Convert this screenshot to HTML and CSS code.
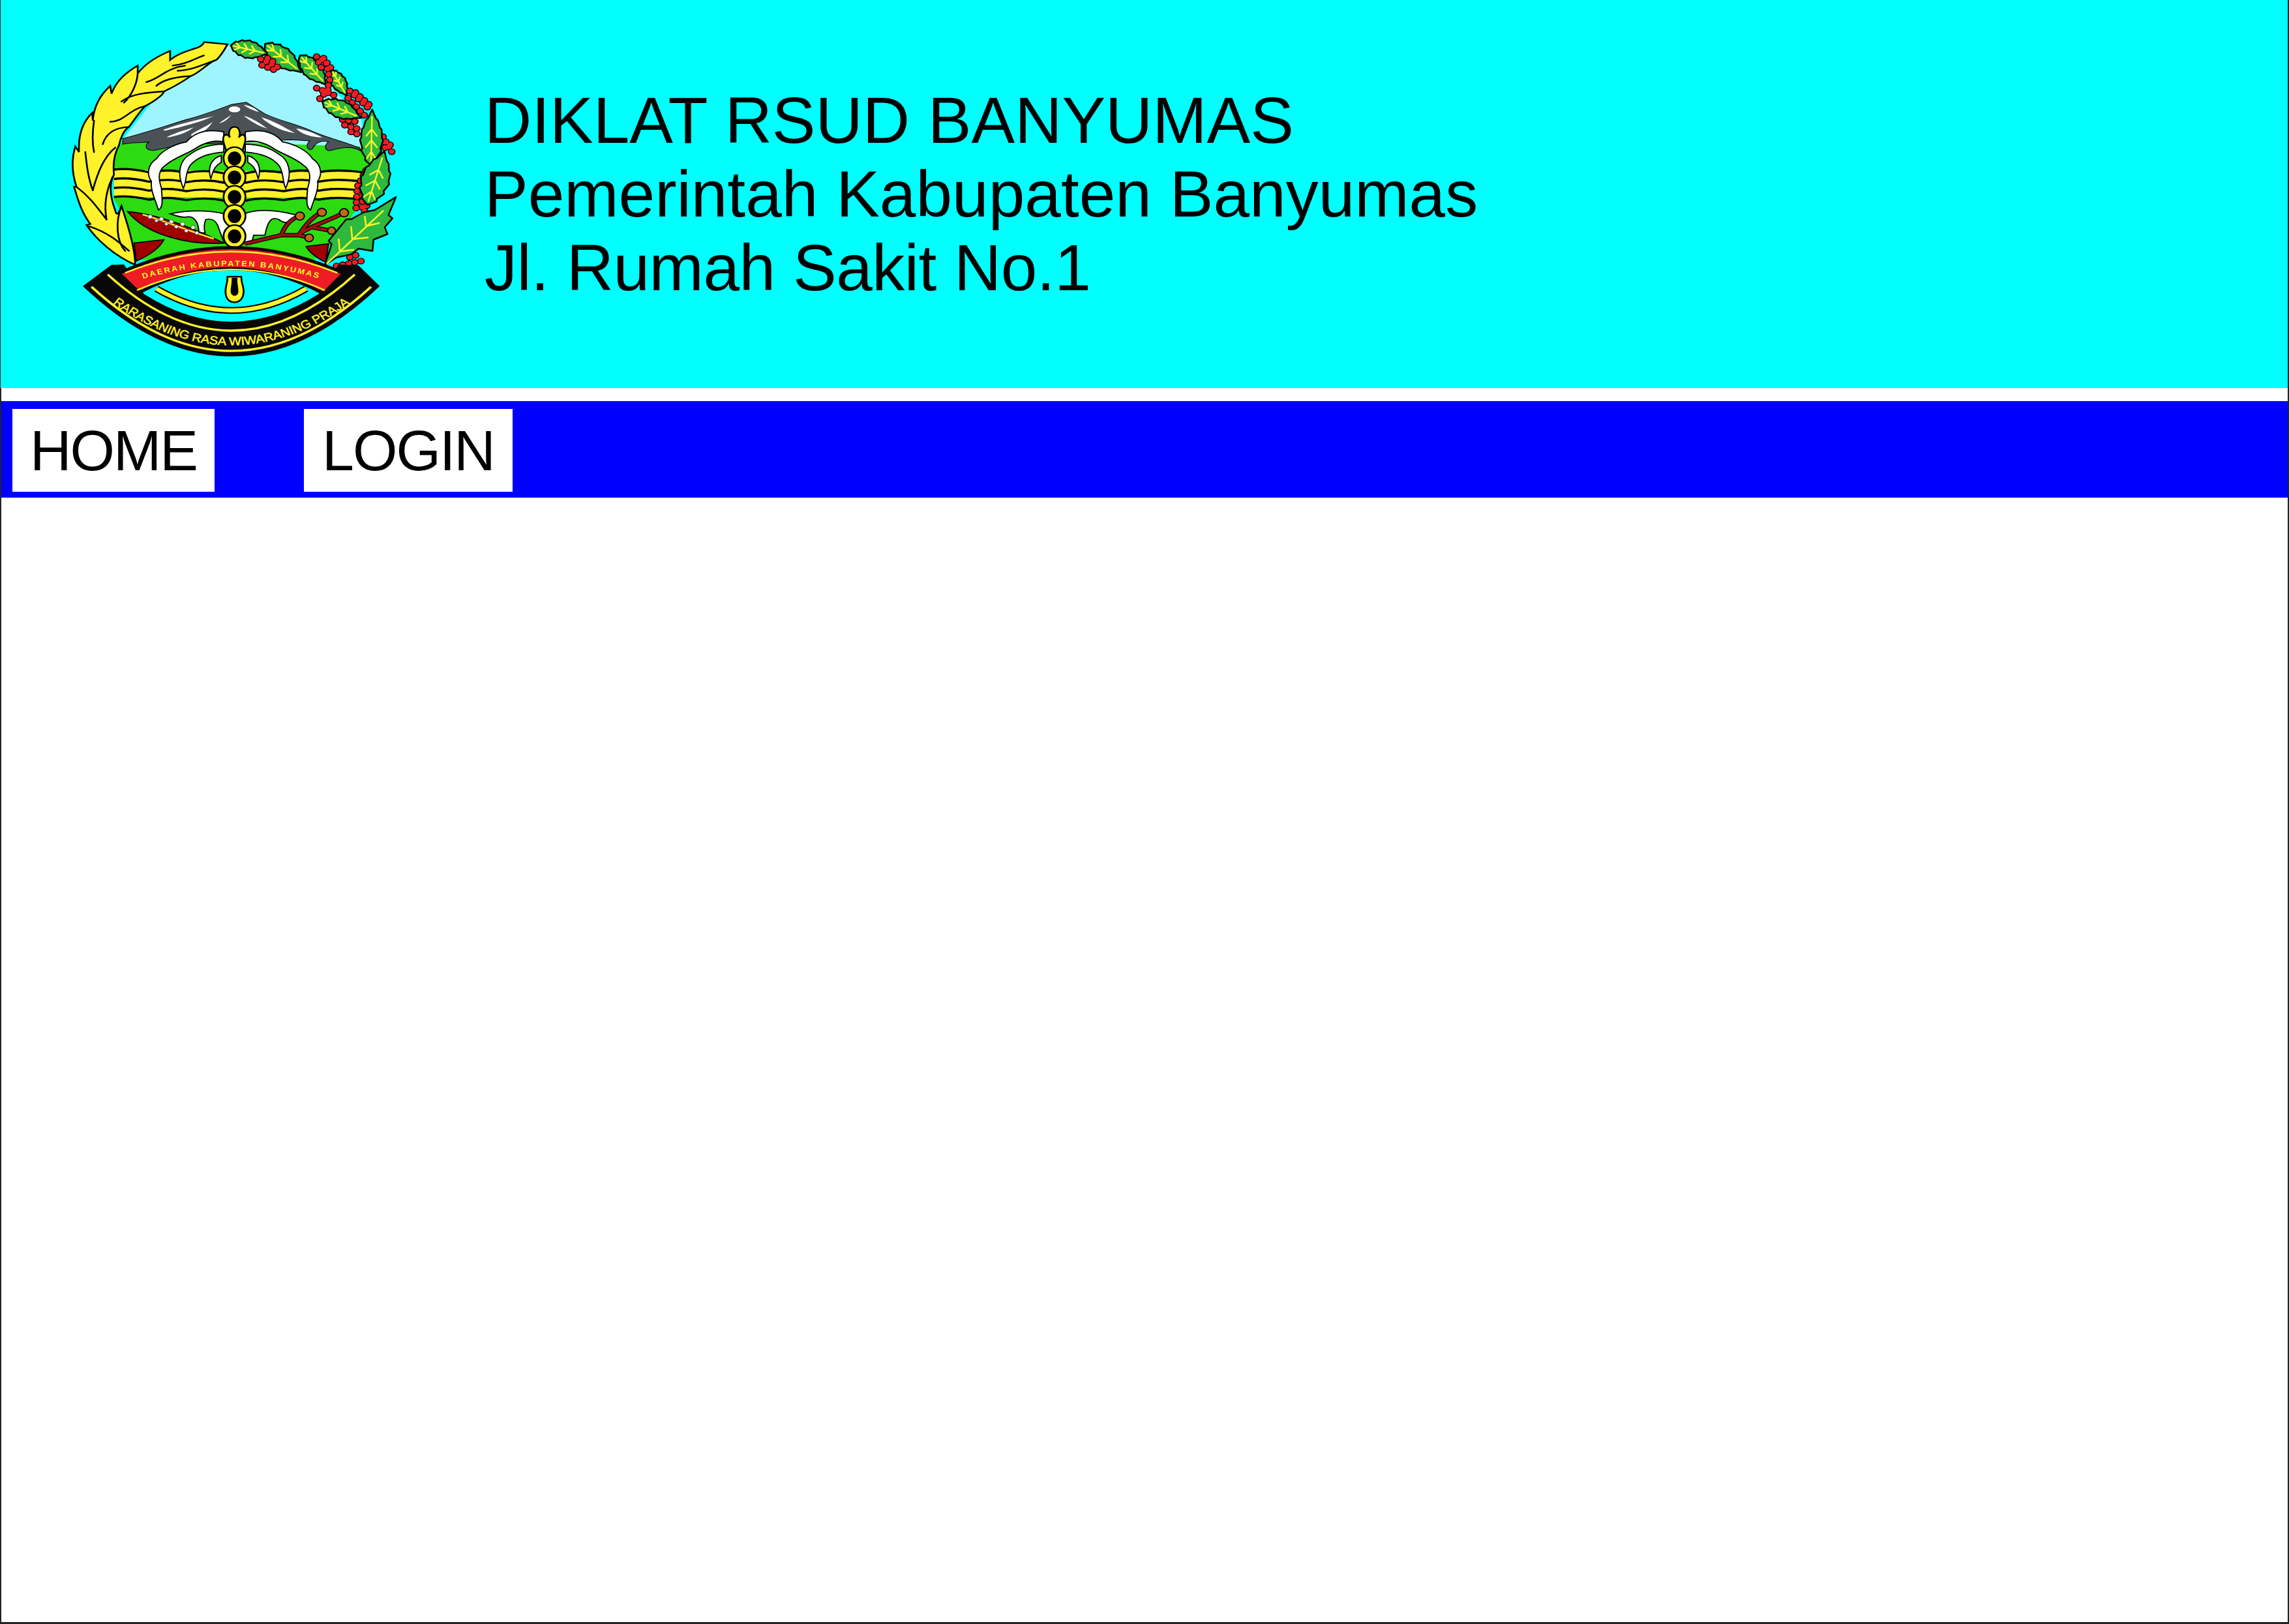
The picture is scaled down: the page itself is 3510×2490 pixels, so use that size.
FILE: index.html
```html
<!DOCTYPE html>
<html lang="en">
  <head>
    <meta charset="UTF-8" />
    <meta name="viewport" content="width=device-width, initial-scale=1.0" />
    <title>Diklat RSUD Banyumas</title>
    <link rel="stylesheet" href="styles.css">
  </head>
  <body>
    <div class="page">
      <header class="banner">
        <svg class="logo" viewBox="0 0 1568 1568" preserveAspectRatio="none" role="img" aria-label="Lambang Kabupaten Banyumas">
          <defs>
            <path id="leaf" class="leaf-body" d="M0 0 L10 -20 L14 -18 L26 -32 L31 -29 L45 -37 L50 -33 L64 -32 L68 -26 L80 -20 L84 -13 L100 0 L84 13 L80 20 L68 26 L64 32 L50 33 L45 37 L31 29 L26 32 L14 18 L10 20 Z" />
            <path id="vein" class="leaf-vein" d="M6 0 L88 0 M25 0 L12 -15 M25 0 L12 15 M45 0 L32 -19 M45 0 L32 19 M65 0 L52 -18 M65 0 L52 18" />
            <path id="berryPath" d="M888 176 L968 218 M893 203 L948 226 M915 172 L950 195 M1112 165 L1150 190 L1165 270 L1150 325 M1140 172 L1172 220 M1120 190 L1140 235 M1112 305 L1185 338 M1125 352 L1165 305 M1245 318 L1318 392 M1238 350 L1305 428 M1268 325 L1322 378 M1216 445 L1288 458 M1225 470 L1288 490 M1250 500 L1288 515 M1378 522 L1415 592 M1362 565 L1398 572 M1385 545 L1410 560 M1310 672 L1275 745 L1270 850 M1298 710 L1295 855 M1322 805 L1300 862 M1192 1097 L1292 1075 M1245 1058 L1288 1042" />
            <path id="stemPath" d="M825 998 L970 960 L1040 960 L1080 970 M970 960 C985 920 1000 895 1040 875 M1040 960 C1070 910 1095 880 1130 858 M1040 955 L1090 925 C1130 905 1180 885 1220 860 M1095 925 L1170 940" />
            <path id="ribbonLine" d="M210 1190 Q770 1760 1330 1190" />
            <path id="mottoLine" d="M272 1246 Q770 1654 1268 1246" />
            <path id="nameLine" d="M370 1170 Q770 1024 1170 1170" />
            <path id="wave" d="M300 668 C350 660 400 670 440 680 C500 668 540 670 590 682 C640 672 690 672 740 684 L830 684 C880 670 930 672 980 682 C1030 670 1070 668 1120 680 C1170 668 1230 670 1295 680" />
            <g id="cloudSet">
              <path d="M740 500 C670 485 620 505 590 545 C540 555 490 585 470 620 C435 645 430 690 450 720 C445 760 465 800 478 848 C500 835 492 790 490 750 C475 700 480 670 505 650 C540 615 590 600 625 575 C665 545 710 535 740 545 Z" />
              <path d="M740 555 C680 555 635 575 605 600 C565 625 550 680 578 752 C592 720 585 680 605 650 C630 615 680 595 740 590 Z" />
              <path d="M730 605 C695 617 672 650 688 710 C695 680 700 655 730 635 Z" />
            </g>
          </defs>

          <path class="sky" d="M765 112 L905 135 L1050 200 L1170 300 L1290 440 L1310 590 L330 540 L480 330 Z" />
          <path class="land" d="M300 600 L340 530 L1285 565 L1325 650 L1300 800 L1250 880 L1170 1000 L1100 1070 L400 1070 L350 900 L300 800 Z" />
          <path class="mountain" d="M335 530 C420 505 520 470 590 445 C660 425 730 395 770 378 L830 368 L905 420 C960 450 1030 465 1090 495 C1160 530 1230 545 1285 572 L1290 585 C1250 560 1210 570 1170 582 C1145 590 1140 560 1160 545 C1130 535 1110 545 1095 575 C1085 590 1060 565 1085 540 L1010 535 L550 560 C520 570 490 575 470 580 C445 590 410 570 440 545 C400 550 370 545 335 555 Z" />
          <g class="snow">
            <ellipse cx="783" cy="400" rx="23" ry="13" />
            <path d="M500 490 C560 465 640 445 700 430 C650 455 570 480 500 495 Z" />
            <path d="M610 510 C640 490 680 470 695 455 C680 485 650 510 610 520 Z" />
            <path d="M510 525 C540 505 580 495 620 480 C590 505 550 520 510 525 Z" />
            <path d="M720 462 L770 425 C755 445 740 458 720 462 Z" />
            <path d="M820 380 C850 385 875 400 880 412 C860 405 835 395 820 380 Z" />
            <path d="M820 428 C860 440 895 470 915 485 C880 475 845 450 820 428 Z" />
            <path d="M890 435 C940 450 980 480 1025 505 C980 500 920 470 890 435 Z" />
            <path d="M1030 485 C1070 490 1110 510 1135 525 C1095 525 1050 510 1030 485 Z" />
          </g>

          <path class="stripes" d="M300 668 L1295 680 L1285 795 L300 790 Z" />
          <g class="wave-lines">
            <use href="#wave" />
            <use href="#wave" y="42" />
            <use href="#wave" y="82" />
            <use href="#wave" y="122" />
          </g>

          <g class="clouds">
            <use href="#cloudSet" />
            <use href="#cloudSet" transform="translate(1566 0) scale(-1 1)" />
          </g>

          <path class="temple" d="M525 865 C590 850 660 845 745 865 L820 865 C880 840 960 850 1030 870 C1020 905 990 915 960 890 C930 875 915 900 905 960 L860 960 L850 1000 L740 990 L720 930 C710 890 690 885 668 890 C660 910 660 930 665 950 L640 950 C640 900 620 870 585 880 C570 880 550 875 525 865 Z" />

          <g class="staff">
            <path d="M783 478 C805 478 808 510 800 525 C812 505 830 510 826 540 C822 565 815 575 815 590 L750 590 C750 575 742 565 738 540 C735 510 752 505 765 525 C757 510 760 478 783 478 Z" />
            <path d="M755 1145 L810 1145 C810 1185 825 1190 818 1225 C810 1270 755 1270 748 1225 C742 1190 755 1185 755 1145 Z" />
            <ellipse cx="783" cy="618" rx="44" ry="50" />
            <ellipse cx="783" cy="703" rx="44" ry="50" />
            <ellipse cx="783" cy="790" rx="44" ry="50" />
            <ellipse cx="783" cy="875" rx="44" ry="50" />
            <ellipse cx="783" cy="965" rx="44" ry="50" />
          </g>
          <g class="links">
            <ellipse cx="783" cy="618" rx="27" ry="31" />
            <ellipse cx="783" cy="703" rx="27" ry="31" />
            <ellipse cx="783" cy="790" rx="27" ry="31" />
            <ellipse cx="783" cy="875" rx="27" ry="31" />
            <ellipse cx="783" cy="965" rx="27" ry="31" />
            <path d="M772 1150 L794 1150 C794 1185 800 1195 798 1215 C795 1235 772 1235 768 1215 C766 1195 772 1185 772 1150 Z" />
          </g>

          <g class="shell">
            <path d="M380 995 L500 980 C480 1025 430 1055 390 1075 Z" />
            <path d="M1070 1010 L1160 998 L1148 1080 C1110 1060 1085 1040 1070 1010 Z" />
          </g>
          <path class="pod" d="M355 855 C500 870 650 945 740 995 C600 1005 430 960 355 855 Z" />
          <path class="pod-seam" d="M415 868 C500 895 620 950 700 975" />
          <g class="seeds">
            <circle cx="445" cy="878" r="9" /><circle cx="490" cy="888" r="9" /><circle cx="470" cy="895" r="7" />
            <circle cx="530" cy="900" r="9" /><circle cx="510" cy="910" r="7" /><circle cx="575" cy="910" r="9" />
            <circle cx="550" cy="922" r="8" /><circle cx="617" cy="925" r="9" /><circle cx="590" cy="940" r="8" />
            <circle cx="632" cy="950" r="8" />
          </g>

          <g class="stem-back"><use href="#stemPath" /></g>
          <g class="stem-front"><use href="#stemPath" /></g>
          <g class="cloves">
            <circle cx="1045" cy="875" r="18" />
            <circle cx="1133" cy="858" r="18" />
            <circle cx="1222" cy="860" r="18" />
            <circle cx="1172" cy="940" r="16" />
            <circle cx="1082" cy="972" r="17" />
          </g>

          <g class="leaves">
            <g transform="translate(768 115) rotate(14) scale(1.55 1.1)"><use href="#leaf" /><use href="#vein" /></g>
            <g transform="translate(905 108) rotate(41) scale(1.93 1.2)"><use href="#leaf" /><use href="#vein" /></g>
            <g transform="translate(1045 160) rotate(51) scale(1.67 1.1)"><use href="#leaf" /><use href="#vein" /></g>
            <g transform="translate(1172 225) rotate(62) scale(1.3 .85)"><use href="#leaf" /><use href="#vein" /></g>
          </g>
          <g class="berry-back"><use href="#berryPath" /></g>
          <g class="berry-front"><use href="#berryPath" /></g>
          <g class="leaves">
            <g transform="translate(1135 365) rotate(25) scale(1.72 1.1)"><use href="#leaf" /><use href="#vein" /></g>
            <g transform="translate(1330 650) rotate(-89) scale(2.5 1.25)"><use href="#leaf" /><use href="#vein" /></g>
            <g transform="translate(1315 825) rotate(-74) scale(2.5 1.6)"><use href="#leaf" /><use href="#vein" /></g>
            <path class="leaf-body" d="M1145 1092 L1172 1000 L1160 985 L1230 890 L1252 888 L1300 858 L1345 848 L1430 790 L1400 870 L1416 885 L1385 925 L1396 955 L1340 980 L1336 1030 L1280 1020 L1250 1045 L1190 1060 Z" />
            <path class="leaf-vein" d="M1152 1088 L1380 850 M1205 1032 L1262 1025 M1205 1032 L1200 975 M1255 978 L1320 970 M1255 978 L1250 920 M1310 920 L1365 905 M1310 920 L1305 875" />
          </g>

          <path class="wheat" d="M755 110 L662 100 C655 115 640 125 620 130 C590 140 550 155 525 180 L525 140 C480 160 430 190 395 240 L395 205 C350 235 310 270 290 330 L285 295 C250 330 220 380 215 450 L213 415 C180 450 155 500 160 590 L145 565 C130 620 130 680 150 745 L140 745 C155 800 170 860 205 910 L190 915 C230 980 300 1050 385 1092 C385 1040 370 960 330 830 C320 860 310 880 305 850 C285 790 280 730 300 690 C295 640 300 600 320 560 C325 530 340 490 360 478 C385 440 410 400 425 385 C470 360 500 330 500 320 C550 295 590 265 610 250 C640 240 690 180 710 180 C730 160 745 130 755 110 Z" />
          <g class="wheat-lines">
            <path d="M535 205 C590 200 630 170 660 160" />
            <path d="M555 228 C610 225 660 200 705 182" />
            <path d="M430 278 C480 265 510 215 585 205" />
            <path d="M470 295 C500 265 550 255 605 252" />
            <path d="M340 370 C370 340 390 290 395 245" />
            <path d="M330 365 C370 330 430 325 500 320" />
            <path d="M285 455 C340 455 360 400 425 385" />
            <path d="M255 555 C270 500 310 480 360 478" />
            <path d="M220 590 C210 540 215 490 220 450" />
            <path d="M215 760 C195 700 190 640 185 590" />
            <path d="M215 760 C235 680 260 610 305 570" />
            <path d="M270 890 C235 840 205 790 150 745" />
            <path d="M270 890 C260 830 265 770 295 700" />
            <path d="M360 1030 C320 990 280 950 200 920" />
            <path d="M345 1030 C310 990 305 900 330 830" />
          </g>

          <path class="ribbon" d="M175 1187 L290 1092 L340 1090 L420 1222 Q770 1468 1120 1222 L1200 1090 L1280 1095 L1365 1187 Q770 1813 175 1187 Z" />
          <path class="ribbon-stripe" d="M275 1135 Q770 1635 1265 1135" />
          <use href="#ribbonLine" class="ribbon-stripe" />
          <text class="motto"><textPath href="#mottoLine" startOffset="50%" text-anchor="middle">RARASANING RASA WIWARANING PRAJA</textPath></text>

          <path class="arc-under" d="M470 1198 Q770 1392 1070 1198" />
          <path class="arc-under-top" d="M470 1198 Q770 1392 1070 1198" />
          <path class="name-band" d="M320 1130 Q770 900 1220 1130 L1140 1220 Q770 1000 400 1215 Z" />
          <path class="name-stripe" d="M345 1128 Q770 938 1195 1128" />
          <path class="name-stripe" d="M392 1205 Q770 1020 1145 1205" />
          <text class="name"><textPath href="#nameLine" startOffset="50%" text-anchor="middle">DAERAH KABUPATEN BANYUMAS</textPath></text>
        </svg>
        <div class="title">
          <h1>DIKLAT RSUD BANYUMAS</h1>
          <p>Pemerintah Kabupaten Banyumas</p>
          <p class="address">Jl. Rumah Sakit No.1</p>
        </div>
      </header>
      <nav class="menu">
        <a class="menu-home" href="#">HOME</a>
        <a class="menu-login" href="#">LOGIN</a>
      </nav>
      <main class="content"></main>
    </div>
  </body>
</html>
```

FILE: styles.css
```css
* {
  margin: 0;
  padding: 0;
  box-sizing: border-box;
}

body {
  font-family: "Liberation Sans", Arial, sans-serif;
  background: #fff;
  color: #000;
}

.page {
  display: flex;
  flex-direction: column;
  height: 2490px;
  width: 3510px;
  border-left: 2px solid #222;
  border-right: 2px solid #222;
  border-bottom: 3px solid #222;
}

.banner {
  display: flex;
  align-items: flex-start;
  gap: 83px;
  height: 595px;
  margin-left: -1px;
  padding: 30px 0 0 59px;
  background: #00ffff;
}

.logo {
  display: block;
  flex: none;
  width: 600px;
  height: 540px;
}

.title {
  margin-top: 98px;
  font-size: 100px;
  line-height: 113px;
}

.title h1 {
  font-size: inherit;
  font-weight: normal;
}

.address {
  letter-spacing: -0.5px;
}

.menu {
  display: flex;
  gap: 137px;
  height: 148px;
  margin-top: 20px;
  padding: 12px 0 0 17px;
  background: #0000ff;
}

.menu a {
  height: 127px;
  background: #fff;
  color: #000;
  font-size: 88px;
  letter-spacing: -2px;
  line-height: 127px;
  text-align: center;
  text-decoration: none;
}

.menu-home { width: 310px; }
.menu-login { width: 320px; }

.content {
  flex: 1;
}

/* logo */
.sky { fill: #9ff5ff; }
.land { fill: #2cdc10; }
.mountain { fill: #4a5258; stroke: #000; stroke-width: 3; }
.snow { fill: #fff; }
.stripes { fill: #fff22a; }

.wave-lines {
  fill: none;
  stroke: #000;
  stroke-width: 10;
}

.clouds,
.temple {
  fill: #fff;
  stroke: #000;
  stroke-width: 5;
}

.staff {
  fill: #fff22a;
  stroke: #000;
  stroke-width: 7;
}

.links { fill: #000; }
.shell { fill: #a00000; stroke: #000; stroke-width: 5; }
.pod { fill: #a00000; stroke: #000; stroke-width: 5; }
.pod-seam { fill: none; stroke: #fff22a; stroke-width: 7; }
.seeds { fill: #eef; stroke: #222; stroke-width: 2; }

.stem-back,
.stem-front { fill: none; }
.stem-back { stroke: #000; stroke-width: 19; }
.stem-front { stroke: #9c1010; stroke-width: 12; }

.cloves { fill: #c4661a; stroke: #000; stroke-width: 5; }

.berry-back,
.berry-front {
  fill: none;
  stroke-linecap: round;
  stroke-dasharray: 0 25;
}

.berry-back { stroke: #000; stroke-width: 30; }
.berry-front { stroke: #ee1c25; stroke-width: 22; }

.leaf-body {
  fill: #2db83e;
  stroke: #000;
  stroke-width: 2.5;
  stroke-linejoin: round;
  vector-effect: non-scaling-stroke;
}

.leaf-vein {
  fill: none;
  stroke: #f4f52a;
  stroke-width: 2.5;
  vector-effect: non-scaling-stroke;
}

.wheat {
  fill: #fff22a;
  stroke: #000;
  stroke-width: 7;
  stroke-linejoin: miter;
}

.wheat-lines {
  fill: none;
  stroke: #000;
  stroke-width: 7;
  stroke-linecap: round;
}

.ribbon { fill: #080808; }

.ribbon-stripe {
  fill: none;
  stroke: #fff22a;
  stroke-width: 10;
}

.motto {
  fill: #fff22a;
  stroke: #fff22a;
  stroke-width: 1.5;
  font-size: 52px;
}

.arc-under { fill: none; stroke: #000; stroke-width: 30; }
.arc-under-top { fill: none; stroke: #fff22a; stroke-width: 18; }
.name-band { fill: #ee1c25; stroke: #080808; stroke-width: 14; stroke-linejoin: miter; }
.name-stripe { fill: none; stroke: #fff22a; stroke-width: 7; }

.name {
  fill: #fff22a;
  font-size: 34px;
  font-weight: bold;
  letter-spacing: 6px;
}
```
